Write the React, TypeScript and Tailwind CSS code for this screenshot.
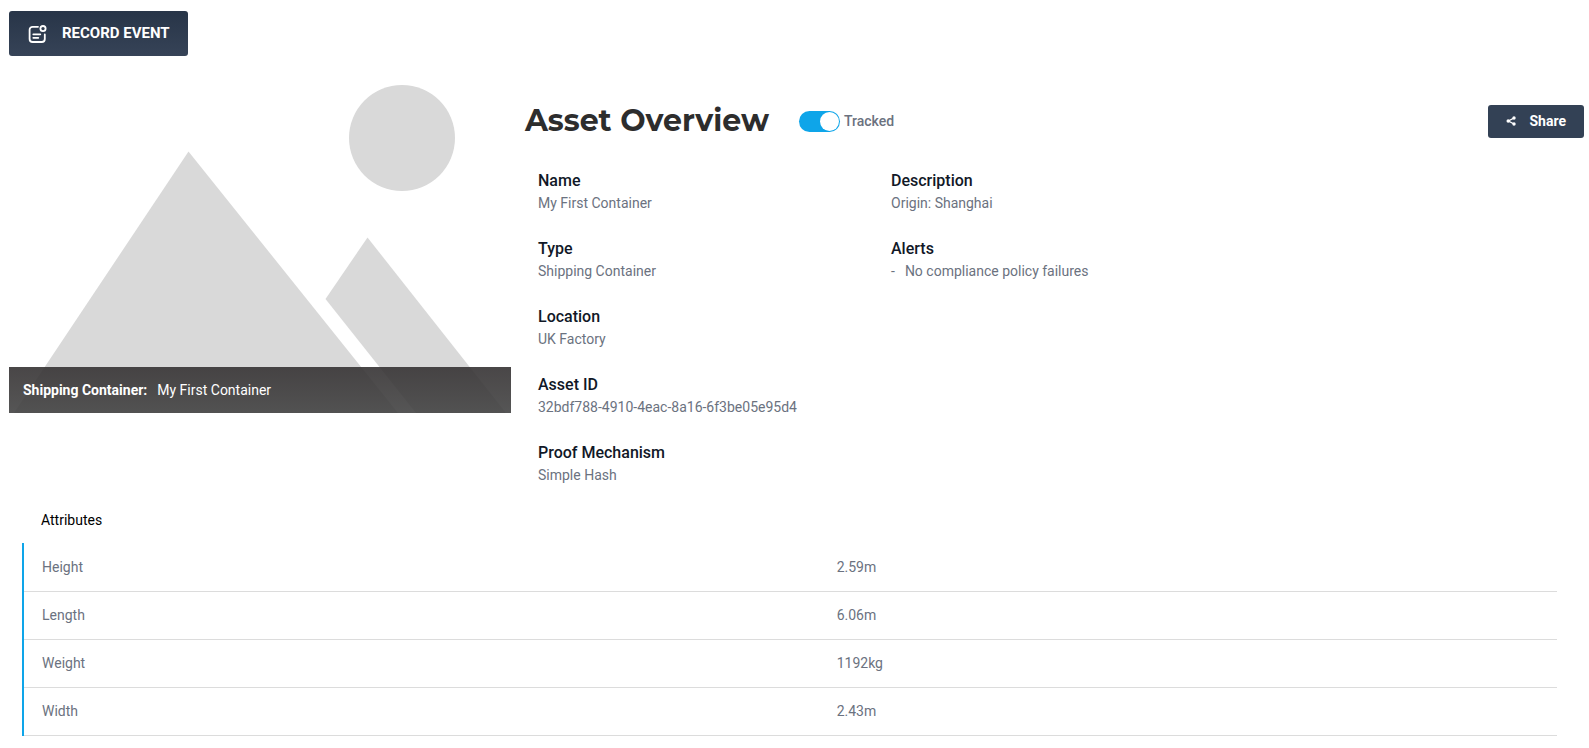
import { useState } from "react";

const details = [
  [
    { label: "Name", value: "My First Container" },
    { label: "Type", value: "Shipping Container" },
    { label: "Location", value: "UK Factory" },
    { label: "Asset ID", value: "32bdf788-4910-4eac-8a16-6f3be05e95d4" },
    { label: "Proof Mechanism", value: "Simple Hash" },
  ],
  [
    { label: "Description", value: "Origin: Shanghai" },
    { label: "Alerts", value: "No compliance policy failures", bullet: true },
  ],
];

const attributes = [
  ["Height", "2.59m"],
  ["Length", "6.06m"],
  ["Weight", "1192kg"],
  ["Width", "2.43m"],
];

function EventIcon() {
  return (
    <svg width="20" height="20" viewBox="0 0 20 20" fill="none" stroke="currentColor" strokeWidth="1.8" strokeLinecap="round" aria-hidden="true">
      <path d="M11 2.800H5.600A3 3 0 0 0 2.600 5.800v9.200a3 3 0 0 0 3 3h9.200a3 3 0 0 0 3-3V10.500" />
      <circle cx="16" cy="4.600" r="2.600" />
      <path d="M6.300 10.300h7M6.300 13.800h5" />
    </svg>
  );
}

function ShareIcon() {
  return (
    <svg width="10" height="10" viewBox="0 0 10 10" fill="currentColor" aria-hidden="true">
      <path d="M8 2 2.500 5 8 8" fill="none" stroke="currentColor" strokeWidth="1.400" />
      <circle cx="8" cy="2" r="1.700" />
      <circle cx="2.200" cy="5" r="1.700" />
      <circle cx="8" cy="8" r="1.700" />
    </svg>
  );
}

export default function App() {
  const [tracked, setTracked] = useState(true);

  return (
    <main className="min-h-screen bg-white pt-[11px] pr-[5px] pb-3 pl-[9px] font-['Roboto',sans-serif] text-sm text-[#6b7280]">
      <button className="flex h-[45px] items-center gap-[15px] rounded-[3px] bg-linear-to-b from-[#283548] to-[#364357] px-[18px] text-[15px] font-bold text-white">
        <EventIcon />
        RECORD EVENT
      </button>

      <section className="mt-[18px] flex gap-[14px]">
        <figure className="relative w-[calc(32%-2px)] shrink-0 self-start">
          <svg viewBox="0 0 502 339" className="block w-full" fill="#d9d9d9" aria-hidden="true">
            <circle cx="393" cy="64" r="53" />
            <path d="M179.500 77.500 5 339h384Z" />
            <path d="M358.500 163.500 316.500 225 407 339h90Z" />
          </svg>
          <figcaption className="absolute inset-x-0 bottom-0 flex h-[46px] items-center gap-[10px] bg-linear-to-b from-[#353233]/90 to-[#434343]/90 px-[14px] text-white">
            <strong>Shipping Container:</strong>
            <span>My First Container</span>
          </figcaption>
        </figure>

        <div className="min-w-0 grow pt-[27px]">
          <header className="flex h-10 items-center">
            <h1 className="font-['Montserrat','Inter',sans-serif] text-[30px] leading-10 font-bold text-[#2d2d2d]">Asset Overview</h1>
            <label className="ml-[30px] flex cursor-pointer items-center gap-1 font-medium">
              <input type="checkbox" role="switch" className="peer sr-only" checked={tracked} onChange={(e) => setTracked(e.target.checked)} />
              <span className="flex h-[21px] w-[41px] items-center rounded-full bg-gray-300 p-px peer-checked:justify-end peer-checked:bg-[#0ea5e9]">
                <span className="size-[19px] rounded-full bg-white" />
              </span>
              Tracked
            </label>
            <button className="ml-auto flex h-[33px] items-center gap-[13px] rounded-[3px] bg-[#334155] px-[18px] font-bold text-white">
              <ShareIcon />
              Share
            </button>
          </header>

          <div className="flex pt-7">
            {details.map((column, i) => (
              <dl key={i} className="flex w-1/3 flex-col gap-6 pl-[13px]">
                {column.map((item) => (
                  <div key={item.label}>
                    <dt className="text-base leading-6 font-medium text-[#111827]">{item.label}</dt>
                    <dd className="flex gap-[10px] leading-5 whitespace-nowrap">
                      {"bullet" in item && <span>-</span>}
                      {item.value}
                    </dd>
                  </div>
                ))}
              </dl>
            ))}
          </div>
        </div>
      </section>

      <section className="mt-[25px] mr-[27px] ml-[13px]">
        <h2 className="pl-[19px] leading-5 font-normal text-black">Attributes</h2>
        <table className="mt-[13px] w-full border-l-2 border-[#0ea5e9] text-left">
          <tbody>
            {attributes.map(([name, value]) => (
              <tr key={name} className="h-12 border-b border-b-[#dcdcdc]">
                <th scope="row" className="w-[52%] pl-[18px] font-normal">{name}</th>
                <td className="px-4">{value}</td>
              </tr>
            ))}
          </tbody>
        </table>
      </section>
    </main>
  );
}
